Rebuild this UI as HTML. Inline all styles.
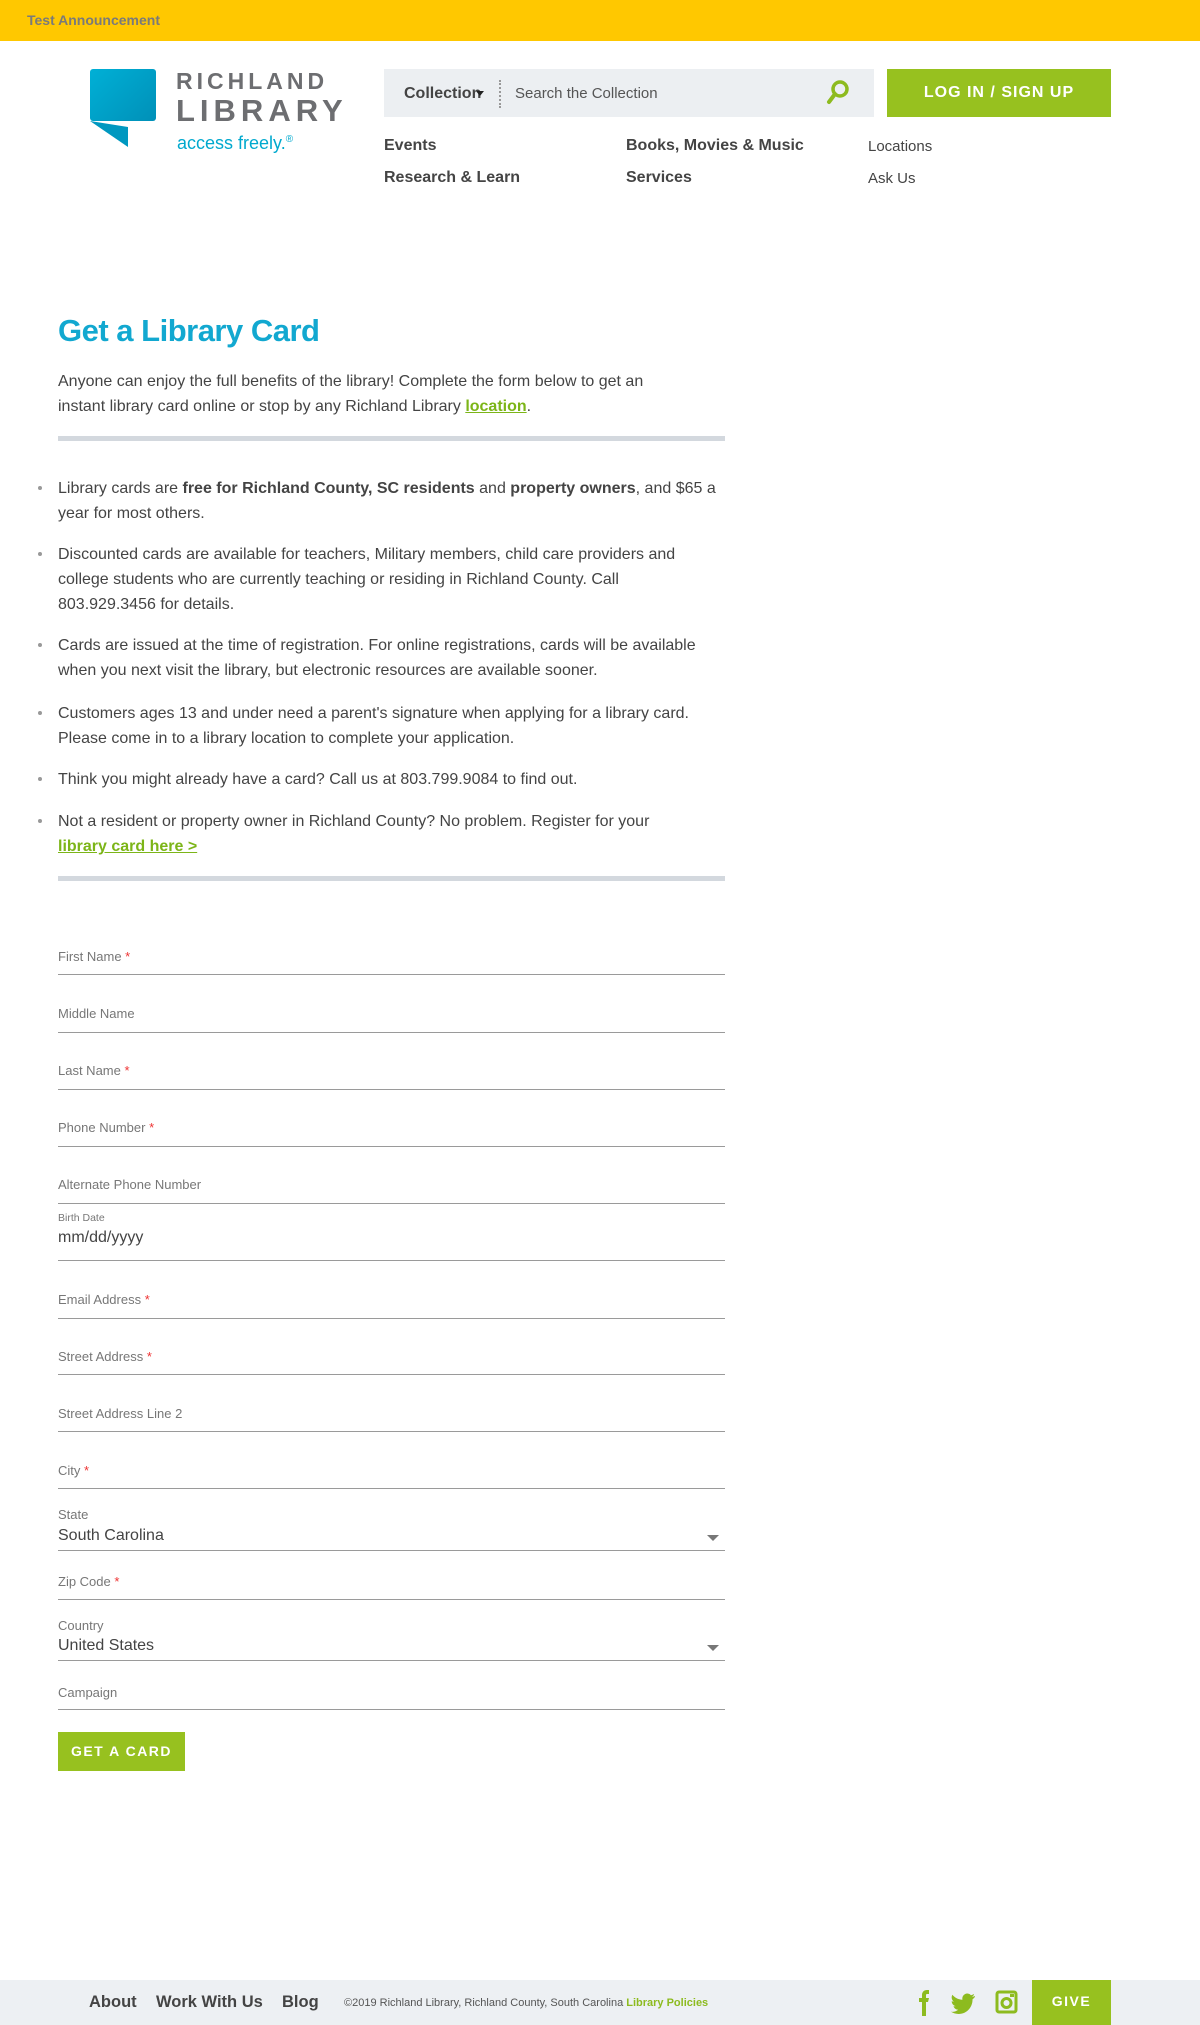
<!DOCTYPE html>
<html><head><meta charset="utf-8">
<style>
*{margin:0;padding:0;box-sizing:border-box}
body{width:1200px;height:2025px;position:relative;background:#fff;font-family:"Liberation Sans",sans-serif;color:#444;overflow:hidden}
.a{position:absolute;white-space:nowrap}
.ann{left:0;top:0;width:1200px;height:41px;background:#ffc800}
.nav{font-size:16px;font-weight:bold;color:#444}
p.t{font-size:16px;line-height:25px;color:#444;white-space:normal}
.g{color:#7cb518;font-weight:bold;text-decoration:underline}
.div{position:absolute;left:58px;width:667px;height:5px;background:#d3d8de}
.li{position:absolute;left:58px;width:664px;font-size:16px;line-height:25px;color:#444}
.li:before{content:"";position:absolute;left:-20px;top:10px;width:4px;height:4px;border-radius:2px;background:#999}
.f{position:absolute;left:58px;width:667px;border-bottom:1px solid #9a9a9a}
.lab{position:absolute;left:58px;font-size:13px;color:#777;white-space:nowrap}
.lab b{color:#e33;font-weight:normal}
.val{position:absolute;left:58px;font-size:16px;color:#444;white-space:nowrap}
.arr{position:absolute;left:707px;width:0;height:0;border-left:6px solid transparent;border-right:6px solid transparent;border-top:6px solid #777}
</style></head><body>
<div class="a ann"></div>
<div class="a" style="left:27px;top:12px;font-size:14px;font-weight:bold;color:#7a7a7a">Test Announcement</div>

<div class="a" style="left:90px;top:69px;width:66px;height:52px;background:linear-gradient(135deg,#00b0d6,#0090b8);border-radius:3px"></div>
<svg class="a" style="left:90px;top:121px" width="40" height="27"><polygon points="0,0 38,6 38,26" fill="#0098c0"/></svg>
<div class="a" style="left:176px;top:68px;font-size:23px;font-weight:bold;letter-spacing:4px;color:#6d6e71">RICHLAND</div>
<div class="a" style="left:176px;top:93px;font-size:31px;font-weight:bold;letter-spacing:5px;color:#6d6e71">LIBRARY</div>
<div class="a" style="left:177px;top:133px;font-size:18px;color:#00a9ce">access freely.<sup style="font-size:10px">®</sup></div>

<div class="a" style="left:384px;top:69px;width:490px;height:48px;background:#eceff2"></div>
<div class="a" style="left:404px;top:85px;font-size:16px;font-weight:bold;color:#444">Collection</div>
<div class="a" style="left:476px;top:91px;width:0;height:0;border-left:4px solid transparent;border-right:4px solid transparent;border-top:5px solid #222"></div>
<div class="a" style="left:499px;top:80px;height:28px;border-left:2px dotted #999"></div>
<div class="a" style="left:515px;top:85px;font-size:15px;color:#555">Search the Collection</div>
<svg class="a" style="left:826px;top:78px" width="30" height="30"><circle cx="14" cy="11" r="7" fill="none" stroke="#8dbb1f" stroke-width="3.5"/><line x1="9" y1="16" x2="3" y2="24" stroke="#8dbb1f" stroke-width="4" stroke-linecap="round"/></svg>
<div class="a" style="left:887px;top:69px;width:224px;height:48px;background:#97c11f;color:#fff;font-size:16px;font-weight:bold;letter-spacing:1px;text-align:center;line-height:48px">LOG IN / SIGN UP</div>

<div class="a nav" style="left:384px;top:137px">Events</div>
<div class="a nav" style="left:626px;top:137px">Books, Movies &amp; Music</div>
<div class="a" style="left:868px;top:138px;font-size:15px;color:#444">Locations</div>
<div class="a nav" style="left:384px;top:169px">Research &amp; Learn</div>
<div class="a nav" style="left:626px;top:169px">Services</div>
<div class="a" style="left:868px;top:170px;font-size:15px;color:#444">Ask Us</div>

<div class="a" style="left:58px;top:313px;font-size:31px;font-weight:bold;color:#12a8d0;letter-spacing:-0.5px">Get a Library Card</div>
<p class="a t" style="left:58px;top:369px;width:625px">Anyone can enjoy the full benefits of the library! Complete the form below to get an instant library card online or stop by any Richland Library <span class="g">location</span>.</p>
<div class="div" style="top:436px"></div>

<div class="li" style="top:476px">Library cards are <b>free for Richland County, SC residents</b> and <b>property owners</b>, and $65 a year for most others.</div>
<div class="li" style="top:542px;width:645px">Discounted cards are available for teachers, Military members, child care providers and college students who are currently teaching or residing in Richland County. Call 803.929.3456 for details.</div>
<div class="li" style="top:633px">Cards are issued at the time of registration. For online registrations, cards will be available when you next visit the library, but electronic resources are available sooner.</div>
<div class="li" style="top:701px;width:640px">Customers ages 13 and under need a parent's signature when applying for a library card. Please come in to a library location to complete your application.</div>
<div class="li" style="top:767px">Think you might already have a card? Call us at 803.799.9084 to find out.</div>
<div class="li" style="top:809px;width:640px">Not a resident or property owner in Richland County? No problem. Register for your <span class="g">library card here &gt;</span></div>
<div class="div" style="top:876px"></div>

<div class="lab" style="top:949px">First Name <b>*</b></div><div class="f" style="top:974px"></div>
<div class="lab" style="top:1006px">Middle Name</div><div class="f" style="top:1032px"></div>
<div class="lab" style="top:1063px">Last Name <b>*</b></div><div class="f" style="top:1089px"></div>
<div class="lab" style="top:1120px">Phone Number <b>*</b></div><div class="f" style="top:1146px"></div>
<div class="lab" style="top:1177px">Alternate Phone Number</div><div class="f" style="top:1203px"></div>
<div class="lab" style="top:1212px;font-size:10.5px">Birth Date</div>
<div class="val" style="top:1229px">mm/dd/yyyy</div><div class="f" style="top:1260px"></div>
<div class="lab" style="top:1292px">Email Address <b>*</b></div><div class="f" style="top:1318px"></div>
<div class="lab" style="top:1349px">Street Address <b>*</b></div><div class="f" style="top:1374px"></div>
<div class="lab" style="top:1406px">Street Address Line 2</div><div class="f" style="top:1431px"></div>
<div class="lab" style="top:1463px">City <b>*</b></div><div class="f" style="top:1488px"></div>
<div class="lab" style="top:1507px">State</div>
<div class="val" style="top:1527px">South Carolina</div><div class="arr" style="top:1535px"></div><div class="f" style="top:1550px"></div>
<div class="lab" style="top:1574px">Zip Code <b>*</b></div><div class="f" style="top:1599px"></div>
<div class="lab" style="top:1618px">Country</div>
<div class="val" style="top:1637px">United States</div><div class="arr" style="top:1645px"></div><div class="f" style="top:1660px"></div>
<div class="lab" style="top:1685px">Campaign</div><div class="f" style="top:1709px"></div>
<div class="a" style="left:58px;top:1732px;width:127px;height:39px;background:#97c11f;color:#fff;font-size:14px;font-weight:bold;letter-spacing:1.5px;text-align:center;line-height:39px">GET A CARD</div>

<div class="a" style="left:0;top:1980px;width:1200px;height:45px;background:#edf0f3"></div>
<div class="a" style="left:89px;top:1993px;font-size:16.5px;font-weight:bold;color:#444">About</div>
<div class="a" style="left:156px;top:1993px;font-size:16.5px;font-weight:bold;color:#444">Work With Us</div>
<div class="a" style="left:282px;top:1993px;font-size:16.5px;font-weight:bold;color:#444">Blog</div>
<div class="a" style="left:344px;top:1997px;font-size:11px;color:#555">©2019 Richland Library, Richland County, South Carolina <b style="color:#8dbb1f">Library Policies</b></div>
<svg class="a" style="left:912px;top:1990px" width="110" height="26">
<path d="M10 26V12H7V8h3V5c0-3 2-5 5-5h2v4h-2c-1 0-1 1-1 1v3h3l-1 4h-2v14z" fill="#8dbb1f"/>
<path d="M41 8c-1 .5-2 .7-3 .8 1-.6 2-1.6 2-2.8-1 .6-2 1-3 1.2a5 5 0 0 0-8.6 4.5c-4-.2-8-2.2-10-5-1.5 2.5-.5 5.5 1.5 7-.8 0-1.5-.3-2.2-.6 0 2.5 1.7 4.5 4 5-.7.2-1.5.2-2.2.1.7 2 2.5 3.4 4.7 3.5-2 1.6-4.6 2.4-7.2 2.1 2.2 1.4 4.8 2.2 7.5 2.2 9 0 14-7.6 14-14v-.6c1-.7 1.8-1.6 2.5-2.6z" fill="#8dbb1f" transform="translate(22,-2)"/>
<rect x="85" y="2" width="19" height="20" rx="2" fill="none" stroke="#8dbb1f" stroke-width="3"/><circle cx="94.5" cy="13" r="4.5" fill="none" stroke="#8dbb1f" stroke-width="3"/><rect x="98" y="4" width="4" height="3" fill="#8dbb1f"/>
</svg>
<div class="a" style="left:1032px;top:1980px;width:79px;height:45px;background:#97c11f;color:#fff;font-size:14px;font-weight:bold;letter-spacing:1.5px;text-align:center;line-height:42px">GIVE</div>
</body></html>
